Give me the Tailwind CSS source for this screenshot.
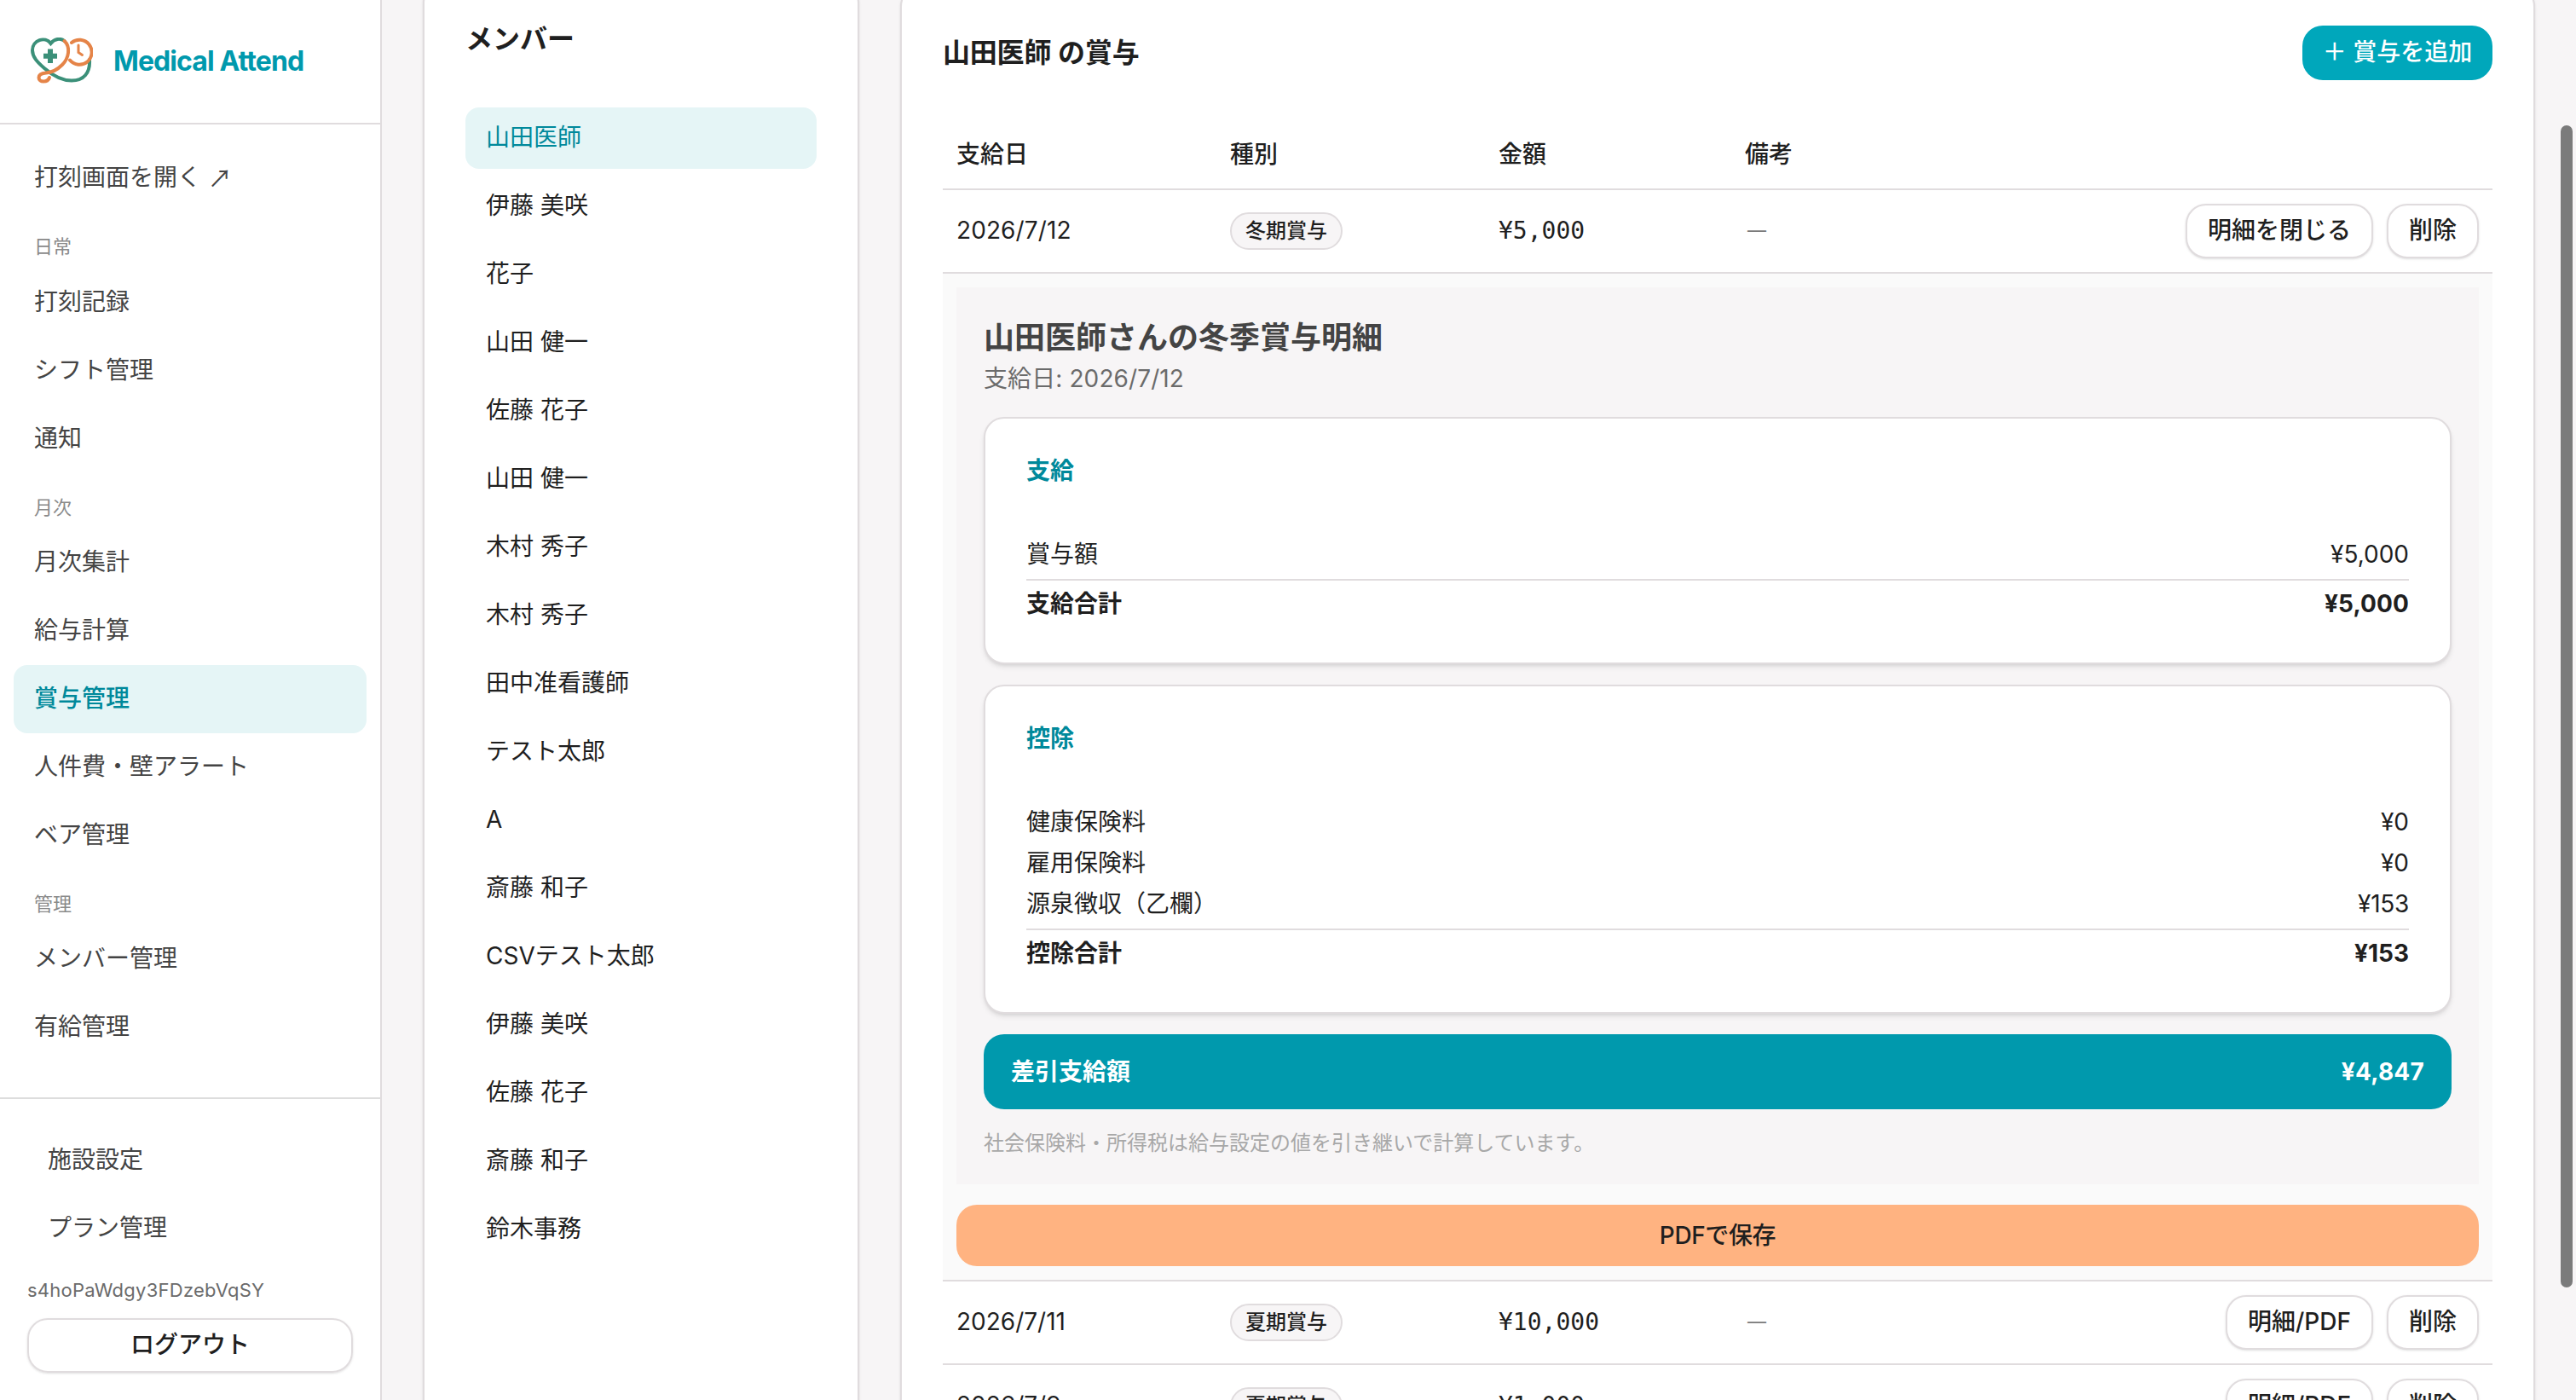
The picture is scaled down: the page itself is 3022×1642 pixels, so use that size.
<!DOCTYPE html>
<html lang="ja">
<head>
    <meta charset="UTF-8">
    <title>Medical Attend</title>
    <meta name="viewport" content="width=device-width, initial-scale=1.0">
    <!-- Tailwind CSS CDN -->
    <script src="https://cdn.jsdelivr.net/npm/@tailwindcss/browser@4"></script>
</head>
<body class="bg-[#f7f5f6] h-[1642px] flex overflow-hidden relative text-[28px] leading-[40px] text-[#1f1f1f] font-['Inter','Noto_Sans_CJK_JP',sans-serif]">
    <!-- Sidebar -->
    <aside class="w-[448px] h-full shrink-0 bg-white border-r-2 border-[#e0dcde] flex flex-col">
        <div class="h-[146px] shrink-0 border-b-2 border-[#e0dcde] flex items-center pl-9 gap-6">
            <svg class="w-[73px] h-[56px]" viewBox="0 0 73 56" fill="none" stroke-width="4" stroke-linecap="round">
                <path d="M69 26C70 42 62 50.500 48 50.500C36 50.500 24 43 16 36C8 29 2 23 2 15C2 3 17 -2 23.500 7C28 1 35 0.500 39.500 4" stroke="#3b9079"/>
                <path d="M39.500 4C47 11 45 24 37 32C30 39 25 41 18 41.500C12 42 9.500 44 9.500 47C9.500 50 12 51.500 15 51.500C19 51.500 21 50 22 47" stroke="#e58448"/>
                <path d="M48 6A14.500 14.500 0 1 1 46 26.500" stroke="#e58448"/>
                <path d="M56 9V17.500L60.500 20.500" stroke="#e58448" stroke-width="3"/>
                <path d="M23 13.500V30M15 21.700H31" stroke="#3b9079" stroke-width="6" stroke-linecap="butt"/>
            </svg>
            <span class="text-[32px] font-bold text-[#0099ad] tracking-[-0.9px] whitespace-nowrap">Medical Attend</span>
        </div>
        <nav class="flex-1 pt-[23px] px-4 text-[#444]">
            <a class="flex items-center h-20 px-6 pb-0.5 whitespace-pre">打刻画面を開く <span class="font-['Noto_Sans_CJK_JP',sans-serif]">↗</span></a>
            <p class="h-[66px] px-6 pt-[20px] text-[22px] text-[#8a8a8a]">日常</p>
            <a class="flex items-center h-20 px-6 pb-0.5">打刻記録</a>
            <a class="flex items-center h-20 px-6 pb-0.5">シフト管理</a>
            <a class="flex items-center h-20 px-6 pb-0.5">通知</a>
            <p class="h-[65px] px-6 pt-[20px] text-[22px] text-[#8a8a8a]">月次</p>
            <a class="flex items-center h-20 px-6 pb-0.5">月次集計</a>
            <a class="flex items-center h-20 px-6 pb-0.5">給与計算</a>
            <a class="flex items-center h-20 px-6 pb-0.5 rounded-2xl bg-[#e5f5f6] text-[#00899b] font-medium">賞与管理</a>
            <a class="flex items-center h-20 px-6 pb-0.5">人件費・壁アラート</a>
            <a class="flex items-center h-20 px-6 pb-0.5">ベア管理</a>
            <p class="h-[65px] px-6 pt-[20px] text-[22px] text-[#8a8a8a]">管理</p>
            <a class="flex items-center h-20 px-6 pb-0.5">メンバー管理</a>
            <a class="flex items-center h-20 px-6 pb-0.5">有給管理</a>
        </nav>
        <div class="h-[355px] shrink-0 border-t-2 border-[#ddd] pt-8 px-8 text-[#444]">
            <a class="flex items-center h-20 px-6 pb-0.5">施設設定</a>
            <a class="flex items-center h-20 px-6 pb-0.5">プラン管理</a>
            <p class="h-[65px] pt-[12px] text-[22px] text-[#6b6b6b] tracking-[0.25px]">s4hoPaWdgy3FDzebVqSY</p>
            <button class="block w-[382px] h-16 pb-0.5 rounded-3xl border-2 border-[#e0dcde] shadow-sm text-[#1f1f1f] font-medium">ログアウト</button>
        </div>
    </aside>

    <main class="flex-1 h-full overflow-hidden flex items-start gap-12 pl-12">
        <!-- Members -->
        <section class="w-[512px] h-[1700px] -mt-6 shrink-0 bg-white border-2 border-[#e0dcde] rounded-[28px] shadow-sm px-12 pt-12">
            <h2 class="text-[32px] font-semibold mb-[60px]">メンバー</h2>
            <ul class="flex flex-col gap-2">
                <li class="h-[72px] flex items-center px-6 pb-0.5 rounded-2xl bg-[#e5f5f6] text-[#00899b]">山田医師</li>
                <li class="h-[72px] flex items-center px-6 pb-0.5">伊藤 美咲</li>
                <li class="h-[72px] flex items-center px-6 pb-0.5">花子</li>
                <li class="h-[72px] flex items-center px-6 pb-0.5">山田 健一</li>
                <li class="h-[72px] flex items-center px-6 pb-0.5">佐藤 花子</li>
                <li class="h-[72px] flex items-center px-6 pb-0.5">山田 健一</li>
                <li class="h-[72px] flex items-center px-6 pb-0.5">木村 秀子</li>
                <li class="h-[72px] flex items-center px-6 pb-0.5">木村 秀子</li>
                <li class="h-[72px] flex items-center px-6 pb-0.5">田中准看護師</li>
                <li class="h-[72px] flex items-center px-6 pb-0.5">テスト太郎</li>
                <li class="h-[72px] flex items-center px-6 pb-0.5">A</li>
                <li class="h-[72px] flex items-center px-6 pb-0.5">斎藤 和子</li>
                <li class="h-[72px] flex items-center px-6 pb-0.5">CSVテスト太郎</li>
                <li class="h-[72px] flex items-center px-6 pb-0.5">伊藤 美咲</li>
                <li class="h-[72px] flex items-center px-6 pb-0.5">佐藤 花子</li>
                <li class="h-[72px] flex items-center px-6 pb-0.5">斎藤 和子</li>
                <li class="h-[72px] flex items-center px-6 pb-0.5">鈴木事務</li>
            </ul>
        </section>

        <!-- Bonuses -->
        <section class="w-[1918px] h-[1800px] -mt-5 shrink-0 bg-white border-2 border-[#e0dcde] rounded-[28px] shadow-sm px-12 pt-12">
            <div class="h-16 flex items-center justify-between">
                <h2 class="text-[32px] font-semibold tracking-[-0.2px]">山田医師 の賞与</h2>
                <button class="w-[223px] h-16 pb-0.5 rounded-3xl bg-[#00a7bb] text-white font-medium whitespace-nowrap">＋ 賞与を追加</button>
            </div>

            <div class="mt-12 h-[81px] border-b-2 border-[#e0dcde] px-4 pb-0.5 grid grid-cols-[321px_315px_289px_1fr] items-center font-medium">
                <span>支給日</span>
                <span>種別</span>
                <span>金額</span>
                <span>備考</span>
            </div>

            <div class="h-[98px] border-b-2 border-[#e0dcde] px-4 grid grid-cols-[321px_315px_289px_1fr_auto] items-center">
                <span class="pb-0.5 tracking-[0.1px]">2026/7/12</span>
                <span><span class="flex w-[132px] h-11 pb-px items-center justify-center rounded-full border-2 border-[#e0dcde] bg-[#f7f5f6] text-2xl font-medium">冬期賞与</span></span>
                <span class="pb-px font-['DejaVu_Sans_Mono',monospace]">¥5,000</span>
                <span class="pb-1 pl-0.5 text-[#7a7a7a] font-['Open_Sans',sans-serif] text-[24px]">—</span>
                <div class="flex gap-4 font-medium">
                    <button class="h-16 px-6 pb-0.5 rounded-3xl border-2 border-[#e0dcde] bg-white shadow-sm">明細を閉じる</button>
                    <button class="h-16 px-6 pb-0.5 rounded-3xl border-2 border-[#e0dcde] bg-white shadow-sm">削除</button>
                </div>
            </div>

            <!-- Statement -->
            <div class="bg-[#fafafa] border-b-2 border-[#e0dcde] p-4">
                <div class="h-[1052px] bg-[#f7f5f6] px-8 pt-8">
                    <h3 class="text-[36px] leading-[54px] font-bold text-[#444]">山田医師さんの冬季賞与明細</h3>
                    <p class="pt-px mb-[25px] text-[#6b6b6b] tracking-[0.1px]">支給日: 2026/7/12</p>

                    <div class="bg-white border-2 border-[#e0dcde] rounded-3xl shadow-md px-12 pt-[47px] pb-[49px]">
                        <h4 class="leading-[28px] font-bold text-[#00899b] mb-16">支給</h4>
                        <div class="flex justify-between"><span>賞与額</span><span>¥5,000</span></div>
                        <div class="flex justify-between mt-[9px] pt-[7px] border-t-2 border-[#e0dcde] font-bold"><span>支給合計</span><span class="tracking-[0.1px]">¥5,000</span></div>
                    </div>

                    <div class="mt-6 bg-white border-2 border-[#e0dcde] rounded-3xl shadow-md px-12 pt-[47px] pb-[49px]">
                        <h4 class="leading-[28px] font-bold text-[#00899b] mb-16">控除</h4>
                        <div class="flex flex-col gap-2">
                            <div class="flex justify-between"><span>健康保険料</span><span>¥0</span></div>
                            <div class="flex justify-between"><span>雇用保険料</span><span>¥0</span></div>
                            <div class="flex justify-between"><span>源泉徴収（乙欄）</span><span class="tracking-[-0.3px]">¥153</span></div>
                            <div class="flex justify-between mt-px pt-[7px] border-t-2 border-[#e0dcde] font-bold"><span>控除合計</span><span>¥153</span></div>
                        </div>
                    </div>

                    <div class="mt-6 h-[88px] px-8 pb-px rounded-3xl bg-[#0099ad] text-white font-bold flex items-center justify-between">
                        <span>差引支給額</span>
                        <span class="tracking-[0.2px]">¥4,847</span>
                    </div>
                    <p class="mt-5 text-2xl leading-[40px] text-[#a8a8a8]">社会保険料・所得税は給与設定の値を引き継いで計算しています。</p>
                </div>
                <button class="mt-6 block w-full h-[72px] pb-px rounded-3xl bg-[#ffb381] font-medium tracking-[-0.4px]">PDFで保存</button>
            </div>

            <div class="h-[98px] border-b-2 border-[#e0dcde] px-4 grid grid-cols-[321px_315px_289px_1fr_auto] items-center">
                <span class="pb-0.5">2026/7/11</span>
                <span><span class="flex w-[132px] h-11 pb-px items-center justify-center rounded-full border-2 border-[#e0dcde] bg-[#f7f5f6] text-2xl font-medium">夏期賞与</span></span>
                <span class="pb-px font-['DejaVu_Sans_Mono',monospace]">¥10,000</span>
                <span class="pb-1 pl-0.5 text-[#7a7a7a] font-['Open_Sans',sans-serif] text-[24px]">—</span>
                <div class="flex gap-4 font-medium">
                    <button class="w-[173px] h-16 pb-0.5 rounded-3xl border-2 border-[#e0dcde] bg-white shadow-sm">明細/PDF</button>
                    <button class="h-16 px-6 pb-0.5 rounded-3xl border-2 border-[#e0dcde] bg-white shadow-sm">削除</button>
                </div>
            </div>
            <div class="h-[98px] border-b-2 border-[#e0dcde] px-4 grid grid-cols-[321px_315px_289px_1fr_auto] items-center">
                <span class="pb-0.5">2026/7/9</span>
                <span><span class="flex w-[132px] h-11 pb-px items-center justify-center rounded-full border-2 border-[#e0dcde] bg-[#f7f5f6] text-2xl font-medium">夏期賞与</span></span>
                <span class="pb-px font-['DejaVu_Sans_Mono',monospace]">¥1,000</span>
                <span class="pb-1 pl-0.5 text-[#7a7a7a] font-['Open_Sans',sans-serif] text-[24px]">—</span>
                <div class="flex gap-4 font-medium">
                    <button class="w-[173px] h-16 pb-0.5 rounded-3xl border-2 border-[#e0dcde] bg-white shadow-sm">明細/PDF</button>
                    <button class="h-16 px-6 pb-0.5 rounded-3xl border-2 border-[#e0dcde] bg-white shadow-sm">削除</button>
                </div>
            </div>
        </section>
    </main>

    <!-- Scrollbar thumb -->
    <div class="absolute right-1 top-[147px] w-[14px] h-[1363px] rounded-full bg-[#7b7b7b]"></div>
</body>
</html>
